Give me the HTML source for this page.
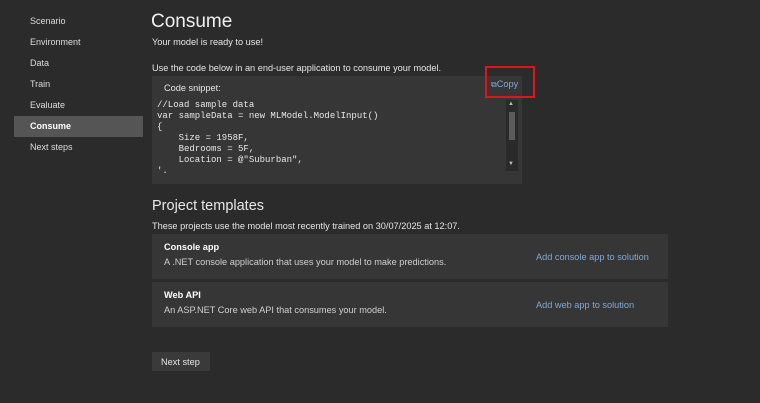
<!DOCTYPE html>
<html><head><meta charset="utf-8"><style>
*{margin:0;padding:0;box-sizing:border-box}
body{width:760px;height:403px;background:#2b2b2b;font-family:"Liberation Sans",sans-serif;color:#e6e6e6;position:relative;overflow:hidden;font-size:9.2px}
.a{position:absolute;white-space:nowrap}
.nav{left:30px;font-size:9px;color:#dcdcdc}
.sel{left:14px;top:116px;width:129px;height:21px;background:#555}
.code{left:152px;top:76px;width:370px;height:108px;background:#363636}
.mono{font-family:"Liberation Mono",monospace;font-size:9px;color:#e8e8e8;line-height:11px}
.card{left:152px;width:516px;background:#363636}
.link{color:#7fa9d6;font-size:9.2px}
</style></head><body>
<div class="a sel"></div>
<div class="a nav" style="top:16px">Scenario</div>
<div class="a nav" style="top:37px">Environment</div>
<div class="a nav" style="top:58px">Data</div>
<div class="a nav" style="top:79px">Train</div>
<div class="a nav" style="top:100px">Evaluate</div>
<div class="a nav" style="top:121px;font-weight:bold;color:#fff">Consume</div>
<div class="a nav" style="top:142px">Next steps</div>

<div class="a" style="left:151px;top:11px;font-size:19px;color:#f0f0f0">Consume</div>
<div class="a" style="left:152px;top:37px">Your model is ready to use!</div>
<div class="a" style="left:152px;top:63px">Use the code below in an end-user application to consume your model.</div>

<div class="a code"></div>
<div class="a" style="left:164px;top:83px">Code snippet:</div>
<div class="a mono" style="left:157px;top:100px">//Load sample data<br>var sampleData = new MLModel.ModelInput()<br>{<br>&nbsp;&nbsp;&nbsp;&nbsp;Size = 1958F,<br>&nbsp;&nbsp;&nbsp;&nbsp;Bedrooms = 5F,<br>&nbsp;&nbsp;&nbsp;&nbsp;Location = @"Suburban",<br>'.</div>
<div class="a" style="left:506px;top:100px;width:12px;height:71px;background:#2a2a2a"></div>
<div class="a" style="left:509px;top:112px;width:6px;height:28px;background:#5a5a5a"></div>
<div class="a" style="left:508px;top:101px;font-size:6px;color:#bbb">▲</div>
<div class="a" style="left:508px;top:161px;font-size:6px;color:#bbb">▼</div>
<div class="a" style="left:485px;top:66px;width:50px;height:32px;border:2px solid #e0141e"></div>
<div class="a link" style="left:491px;top:79px"><span style="font-size:8px">⧉</span>Copy</div>

<div class="a" style="left:152px;top:198px;font-size:14.5px;color:#e8e8e8">Project templates</div>
<div class="a" style="left:152px;top:221px">These projects use the model most recently trained on 30/07/2025 at 12:07.</div>
<div class="a card" style="top:234px;height:45px"></div>
<div class="a" style="left:164px;top:242px;font-weight:bold;color:#fff">Console app</div>
<div class="a" style="left:164px;top:257px;color:#d0d0d0">A .NET console application that uses your model to make predictions.</div>
<div class="a link" style="left:536px;top:252px">Add console app to solution</div>
<div class="a card" style="top:282px;height:45px"></div>
<div class="a" style="left:164px;top:290px;font-weight:bold;color:#fff">Web API</div>
<div class="a" style="left:164px;top:305px;color:#d0d0d0">An ASP.NET Core web API that consumes your model.</div>
<div class="a link" style="left:536px;top:300px">Add web app to solution</div>

<div class="a" style="left:152px;top:352px;width:58px;height:19px;background:#3a3a3a"></div>
<div class="a" style="left:161px;top:357px">Next step</div>
</body></html>
